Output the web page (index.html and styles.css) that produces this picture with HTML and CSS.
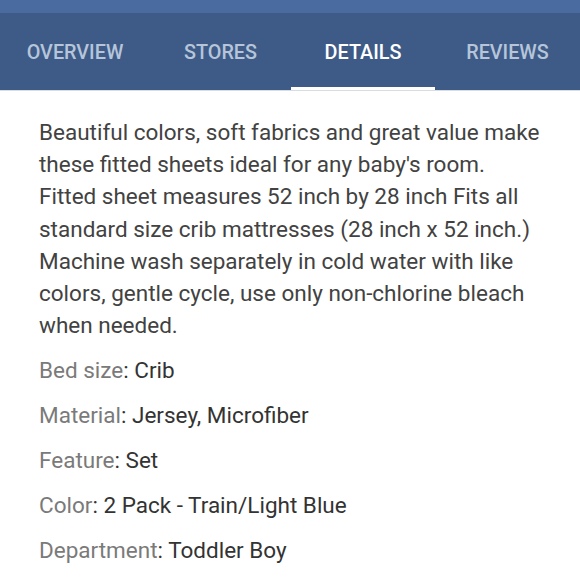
FILE: index.html
```html
<!DOCTYPE html>
<html>
<head>
<meta charset="utf-8">
<link rel="stylesheet" href="styles.css">
</head>
<body>
<div class="status"></div>
<nav class="tabs">
  <div class="tab">OVERVIEW</div>
  <div class="tab">STORES</div>
  <div class="tab active">DETAILS</div>
  <div class="tab">REVIEWS</div>
</nav>
<main class="content">
  <p class="desc">Beautiful colors, soft fabrics and great value make these fitted sheets ideal for any baby's room. Fitted sheet measures 52 inch by 28 inch Fits all standard size crib mattresses (28 inch x 52 inch.) Machine wash separately in cold water with like colors, gentle cycle, use only non-chlorine bleach when needed.</p>
  <ul class="specs">
    <li><span class="label">Bed size</span>: Crib</li>
    <li><span class="label">Material</span>: Jersey, Microfiber</li>
    <li><span class="label">Feature</span>: Set</li>
    <li><span class="label">Color</span>: 2 Pack - Train/Light Blue</li>
    <li><span class="label">Department</span>: Toddler Boy</li>
  </ul>
</main>
</body>
</html>
```
FILE: styles.css
```css
html, body {
  margin: 0;
  padding: 0;
  background: #ffffff;
  font-family: Roboto, "Liberation Sans", sans-serif;
}
.status {
  height: 13px;
  background: #4a6b9f;
}
.tabs {
  display: grid;
  grid-template-columns: 150px 141px 144px 1fr;
  height: 77px;
  background: #3d5b86;
  border-bottom: 1px solid #d8dde4;
}
.tab {
  display: flex;
  align-items: center;
  justify-content: center;
  font-size: 19.8px;
  font-weight: 500;
  color: #b6c5da;
  padding-top: 1px;
  box-sizing: border-box;
}
.tab.active {
  color: #ffffff;
  border-bottom: 3px solid #ffffff;
  padding-top: 4px;
}
.content {
  padding: 25px 36px 0 39px;
}
.desc {
  margin: 0;
  font-size: 22.5px;
  line-height: 32.2px;
  color: #424242;
}
.specs {
  list-style: none;
  margin: 16px 0 0;
  padding: 0;
}
.specs li {
  font-size: 22.5px;
  line-height: 26px;
  color: #333;
  margin-bottom: 19px;
}
.label {
  color: #7a7a7a;
}
```
